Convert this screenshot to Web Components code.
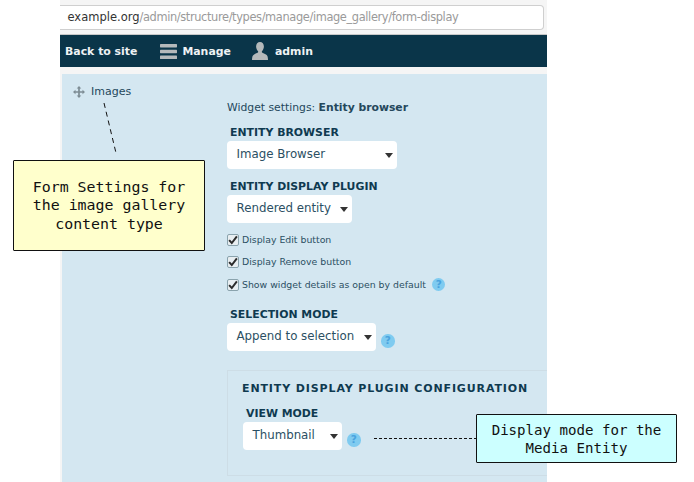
<!DOCTYPE html>
<html><head><meta charset="utf-8"><title>Form display</title>
<style>
html,body{margin:0;padding:0;background:#fff;overflow:hidden}
body{font-family:"DejaVu Sans",sans-serif;color:#1f4256;width:694px;height:482px;position:relative}
</style></head><body>
<app-frame>
  <url-bar host-part="example.org" path="/admin/structure/types/manage/image_gallery/form-display"></url-bar>
  <admin-toolbar></admin-toolbar>
  <form-panel>
    <drag-row slot="side" label="Images"></drag-row>
    <widget-head>Widget settings: <b>Entity browser</b></widget-head>
    <select-field label="ENTITY BROWSER" value="Image Browser" width="170" top="10"></select-field>
    <select-field label="ENTITY DISPLAY PLUGIN" value="Rendered entity" width="125" top="10"></select-field>
    <check-row top="10">Display Edit button</check-row>
    <check-row top="8">Display Remove button</check-row>
    <check-row top="9" help>Show widget details as open by default</check-row>
    <select-field label="SELECTION MODE" value="Append to selection" width="149" top="15" help></select-field>
    <config-box>
      <select-field label="VIEW MODE" value="Thumbnail" width="99" help labelpad="3"></select-field>
    </config-box>
  </form-panel>
</app-frame>
<note-box style="left:13px;top:160px;width:192px;height:91px;--bg:#ffffcc;--fs:14.9px;--lh:18.5px">Form Settings for<br>the image gallery<br>content type</note-box>
<note-box style="left:476px;top:414px;width:201px;height:49px;--bg:#ccffff;--fs:14.1px;--lh:18px">Display mode for the<br>Media Entity</note-box>
<dash-line></dash-line>

<script>
function def(name, css, html, init){
  customElements.define(name, class extends HTMLElement{
    constructor(){super();this.attachShadow({mode:'open'});}
    connectedCallback(){
      const a=n=>this.getAttribute(n);
      this.shadowRoot.innerHTML='<style>'+css+'</style>'+(typeof html==='function'?html(a,this):html);
      if(init)init(a,this);
    }
  });
}

def('app-frame',`:host{display:flex;flex-direction:column;width:487px;height:482px;margin-left:60px;background:#f5f5f5;overflow:hidden;box-sizing:border-box;padding-top:5px}`,`<slot></slot>`);

def('url-bar',`:host{display:block;height:25px;box-sizing:border-box;margin-right:3px;background:#fff;border:1px solid #cfcfcf;border-left:0;border-radius:0 4px 4px 0;padding:0 0 0 7.5px;font:11.4px/22px "DejaVu Sans",sans-serif;letter-spacing:-.37px;color:#9a9a9a;white-space:nowrap;overflow:hidden}
b{font-weight:400;color:#333;font-size:11.5px;letter-spacing:0}`,a=>`<b>${a('host-part')}</b>${a('path')}`);

def('admin-toolbar',`:host{display:flex;align-items:center;height:32px;margin-top:4px;border-top:1px solid #c8c8c8;background:#0a3549;color:#eef2f4;font:bold 10.900px "DejaVu Sans",sans-serif;padding-left:5px;flex:none}
.i{display:flex;align-items:center}svg{display:block;flex:none}
.a{margin-right:23px}.m{margin-right:21px;gap:5px}.u{gap:7px}`,
`<span class="i a">Back to site</span>
<span class="i m"><svg width="17" height="17" viewBox="0 0 17 17"><g fill="#b4b9bb"><rect y="1" width="17" height="3.400" rx=".6"/><rect y="6.800" width="17" height="3.400" rx=".6"/><rect y="12.600" width="17" height="3.400" rx=".6"/></g></svg>Manage</span>
<span class="i u"><svg width="16" height="18" viewBox="0 0 16 18"><path fill="#b4b9bb" d="M8 0c2.400 0 3.900 1.900 3.900 4.400 0 1.900-.8 3.500-1.800 4.600-.5.6-.4 1.500.3 1.800 2.100 1 4.500 1.700 5.100 3.500.3 1 .5 2.200.5 3.700H0c0-1.500.2-2.700.5-3.700.6-1.800 3-2.500 5.100-3.500.7-.3.8-1.200.3-1.800C4.900 7.900 4.100 6.300 4.100 4.400 4.100 1.900 5.600 0 8 0z"/></svg>admin</span>`);

def('form-panel',`:host{display:grid;grid-template-columns:165px 1fr;margin:7px 0 0 2px;background:#d4e7f1;flex:1;min-height:0;overflow:hidden}
.side{padding:10px 0 0 11px}.main{padding:27px 0 0 0;display:flex;flex-direction:column;align-items:flex-start;min-width:0}`,
`<div class="side"><slot name="side"></slot></div><div class="main"><slot></slot></div>`);

def('drag-row',`:host{display:flex;align-items:center;gap:6px;font:11px/16px "DejaVu Sans",sans-serif;color:#24485c}svg{display:block}`,
a=>`<svg width="12" height="12" viewBox="0 0 12 12"><path fill="none" stroke="#7d8c94" stroke-width="1.700" d="M6 1.500V10.500M1.500 6H10.500"/><path fill="#7d8c94" d="M6 0 8.300 2.500H3.700zM6 12 3.700 9.500H8.300zM0 6 2.500 3.700V8.300zM12 6 9.500 8.300V3.700z"/></svg><span>${a('label')}</span>`);

def('widget-head',`:host{display:block;font:10.800px/14px "DejaVu Sans",sans-serif;color:#24485c;white-space:nowrap}`,`<slot></slot>`);

def('help-icon',`:host{display:inline-block;width:13.500px;height:13.500px;border-radius:50%;background:#7fcbf0;color:#4aa3de;font:bold 10.500px/13.500px "DejaVu Sans",sans-serif;text-align:center;flex:none}`,`?`);

def('select-field',`:host{display:block;white-space:nowrap}
.l{font:bold 10.900px/14px "DejaVu Sans",sans-serif;color:#0f3a50;padding:1px 0 0 var(--lp);margin-bottom:1px}
.r{display:flex;align-items:flex-start}
.s{box-sizing:border-box;height:28px;background:#fff;border-radius:4px;position:relative;font:11.800px/26px "DejaVu Sans",sans-serif;color:#2b4f63;padding-left:9.500px}
.s i{position:absolute;right:4px;top:12px;width:0;height:0;border:4px solid transparent;border-top:5px solid #333;border-bottom:0}
help-icon{margin:11px 0 0 5px}`,
a=>`<div class="l" style="--lp:${a('labelpad')||3}px">${a('label')}</div><div class="r"><div class="s" style="width:${a('width')}px">${a('value')}<i></i></div>${a('help')!==null?'<help-icon></help-icon>':''}</div>`,
(a,el)=>{el.style.marginTop=(a('top')||0)+'px';});

def('check-row',`:host{display:flex;align-items:center;font:9.350px/14px "DejaVu Sans",sans-serif;color:#2b4f63;white-space:nowrap;gap:3px}
.b{box-sizing:border-box;width:12px;height:12px;border:1.500px solid #8aa3ad;border-radius:2px;background:#e8eef1;flex:none;display:block}
help-icon{margin:-1px 0 0 3px}`,
(a)=>`<svg class="b" viewBox="0 0 9 9"><path d="M1 4.600 3.400 7.200 8 1.300" fill="none" stroke="#2c2c2c" stroke-width="1.800"/></svg><slot></slot>${a('help')!==null?'<help-icon></help-icon>':''}`,
(a,el)=>{el.style.marginTop=(a('top')||0)+'px';});

def('config-box',`:host{display:block;box-sizing:border-box;align-self:stretch;margin-top:19px;height:106px;border:1px solid #cddde6;border-right:0;padding:11px 0 0 15px}
h4{margin:0 0 10px -1px;font:bold 11px/14px "DejaVu Sans",sans-serif;letter-spacing:.88px;color:#0f3a50;white-space:nowrap}`,
`<h4>ENTITY DISPLAY PLUGIN CONFIGURATION</h4><slot></slot>`);

def('note-box',`:host{position:absolute;display:flex;align-items:center;justify-content:center;text-align:center;box-sizing:border-box;border:1.500px solid #111;border-radius:1px;background:var(--bg);font:var(--fs)/var(--lh) "DejaVu Sans Mono","Liberation Mono",monospace;color:#111;white-space:nowrap}`,`<slot></slot>`);

def('dash-line',`:host{position:absolute;left:0;top:0;width:694px;height:482px;pointer-events:none}svg{display:block}`,
`<svg width="694" height="482" viewBox="0 0 694 482"><path d="M104 103 116 153" stroke="#111" stroke-width="1" stroke-dasharray="5 4" fill="none"/><path d="M374 438.500H476" stroke="#111" stroke-width="1" stroke-dasharray="3 2" fill="none"/></svg>`);
</script>
</body></html>
